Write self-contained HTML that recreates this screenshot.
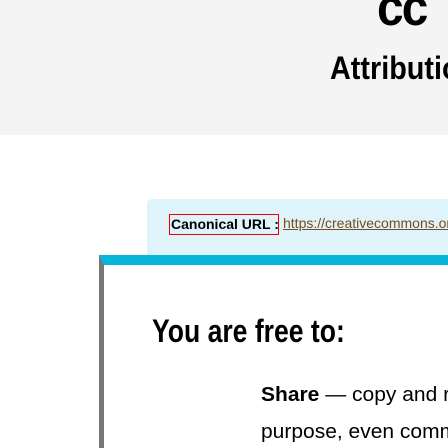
<!DOCTYPE html><html><head><style>
html,body{margin:0;width:448px;height:448px;overflow:hidden}
body{background:#fff;font-family:"Liberation Sans",sans-serif;position:relative}
.wrap{position:absolute;left:0;top:0;width:448px;height:448px;overflow:hidden}
.top{position:absolute;left:0;top:0;width:448px;height:135px;background:#f4f4f4}
.cc{position:absolute;left:377px;top:-22px;font:bold 52px "Liberation Sans",sans-serif;color:#000;letter-spacing:-2px;transform:scaleX(.92);transform-origin:left}
.attr{position:absolute;left:330px;top:50px;font:bold 32px "Liberation Sans",sans-serif;color:#000;white-space:nowrap;transform:scaleX(.9);transform-origin:left}
.blue{position:absolute;left:147px;top:199px;width:320px;height:70px;background:#dff4fa;border-radius:5px}
.lab{position:absolute;left:169px;top:214px;width:108px;height:19px;border:1px solid #e00;font:bold 14px "Liberation Sans",sans-serif;line-height:19px;white-space:nowrap;overflow:hidden}
.lab span{padding-left:1px}
.url{position:absolute;left:283px;top:214px;font:14px "Liberation Sans",sans-serif;line-height:19px;color:#7a4a1a;text-decoration:underline;white-space:nowrap}
.card{position:absolute;left:99px;top:255px;width:360px;height:200px;background:#fff;border-top:10px solid #06b6d9;border-left:5px solid #777}
.h{position:absolute;left:152px;top:313px;font:bold 32px "Liberation Sans",sans-serif;white-space:nowrap;transform:scaleX(.83);transform-origin:left}
.p{position:absolute;left:261px;font:20px "Liberation Sans",sans-serif;white-space:nowrap;transform:scaleX(1.05);transform-origin:left}
</style></head><body><div class="wrap">
<div class="top"></div>
<div class="cc">cc</div>
<div class="attr">Attribution</div>
<div class="blue"></div>
<div class="lab"><span>Canonical URL :</span></div>
<div class="url">https://creativecommons.org</div>
<div class="card"></div>
<div class="h">You are free to:</div>
<div class="p" style="top:384px"><b>Share</b> — copy and redistribute</div>
<div class="p" style="top:421px">purpose, even commercially</div>
</div></body></html>
